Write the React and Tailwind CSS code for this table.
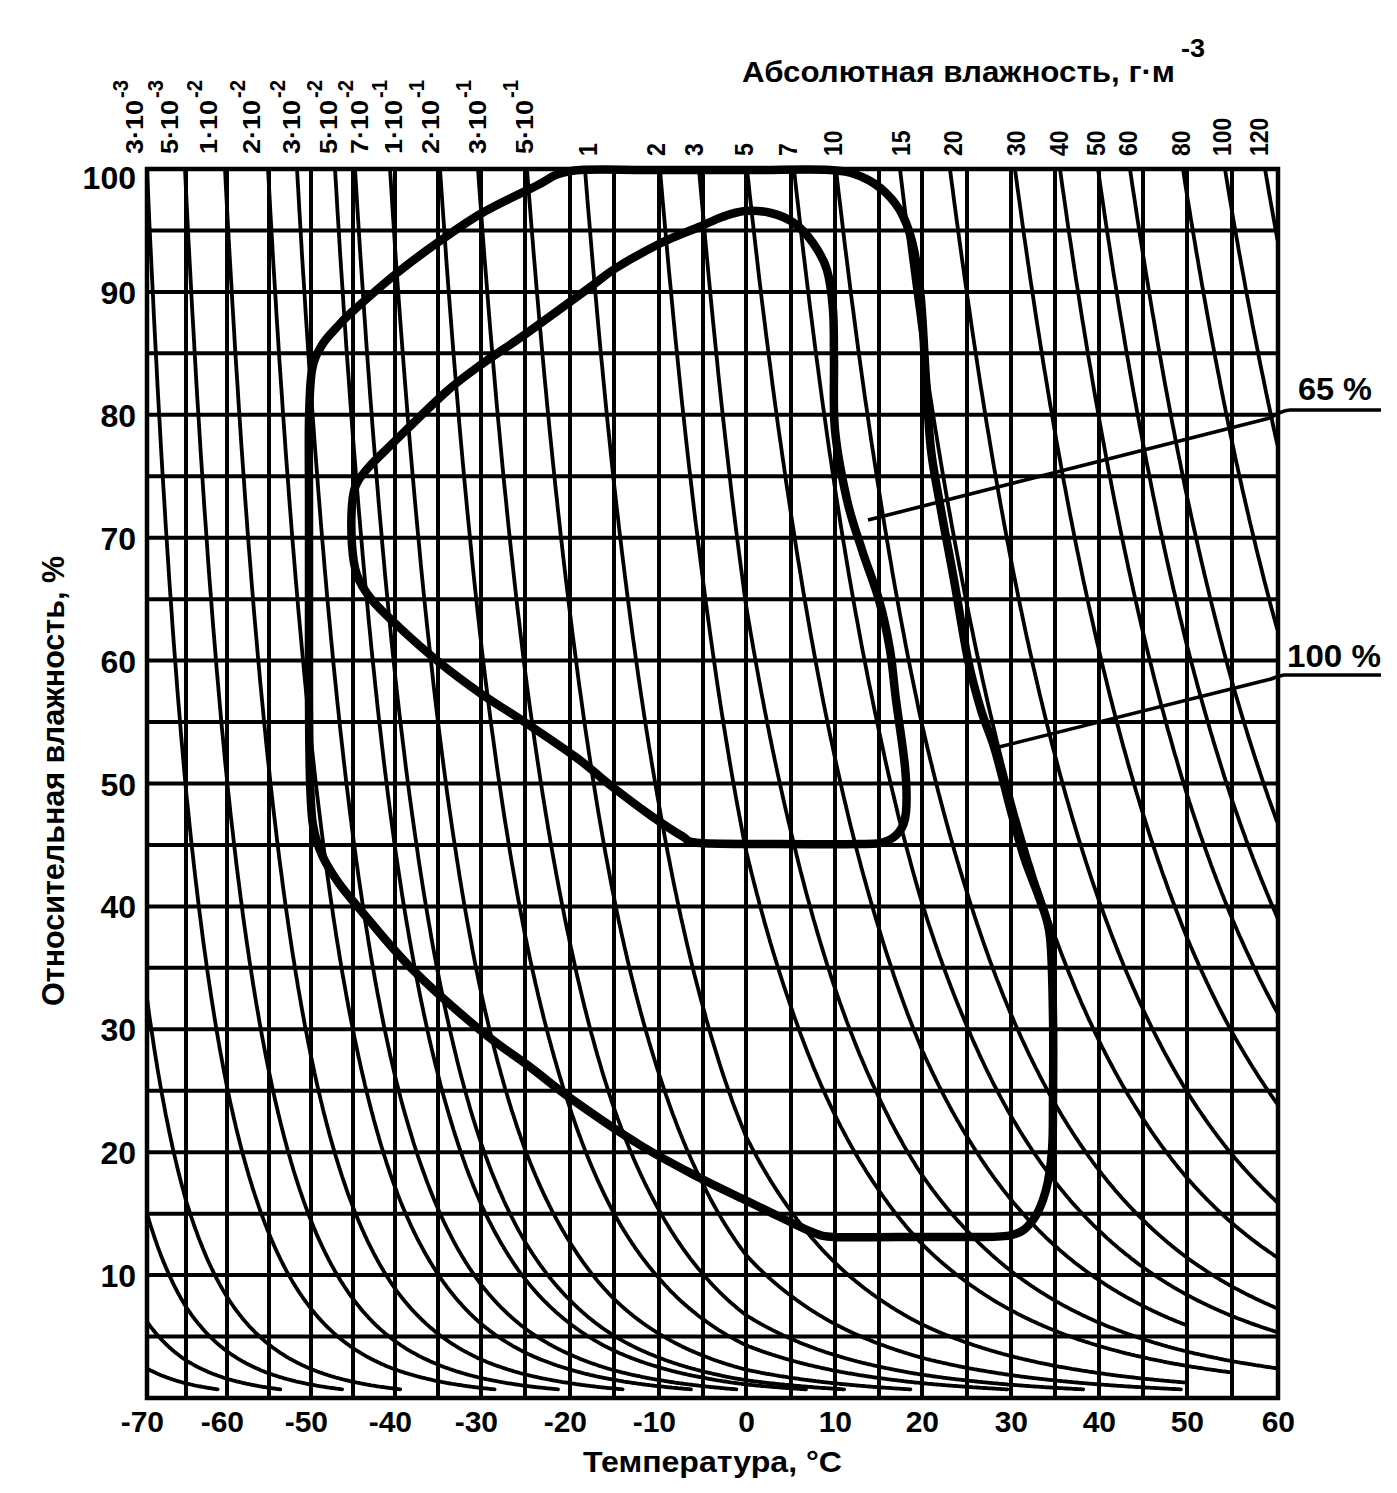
import React from 'react';

// x position of every 5 °C grid line, -70 … 60
const GX = [147, 186, 227, 269, 311, 353, 395, 438, 481, 525, 570, 614, 659, 703, 746, 791, 835, 879, 922, 967, 1011, 1055, 1099, 1143, 1187, 1232, 1278];
const LEFT = 147;
const RIGHT = 1278;
const TOP = 169;
const BOTTOM = 1398;

const tx = (t) => {
  const f = (t + 70) / 5;
  const i = Math.max(0, Math.min(25, Math.floor(f)));
  return GX[i] + (GX[i + 1] - GX[i]) * (f - i);
};

const xt = (x) => {
  let i = 0;
  while (i < 25 && GX[i + 1] < x) i++;
  return -70 + 5 * i + (5 * (x - GX[i])) / (GX[i + 1] - GX[i]);
};

const ry = (rh) => BOTTOM - rh * 12.29;

// saturation absolute humidity, g/m3 (ice below 0 °C)
const aSat = (t) => {
  const e = t < 0
    ? 6.112 * Math.exp((22.46 * t) / (272.62 + t))
    : 6.112 * Math.exp((17.62 * t) / (243.12 + t));
  return (216.7 * e) / (t + 273.15);
};

// curves of constant absolute humidity: [x at the top, rh where it starts, last temperature]
const CURVES = [
  [147, 100], [185, 100], [225, 100], [268, 100], [297, 100], [335, 100], [355, 100],
  [390, 100], [440, 100], [478, 100], [527, 100], [585, 100, 50], [660, 100, 55], [699, 100],
  [747, 100, 50], [794, 100], [836, 100], [900, 100], [950, 100], [1015, 100], [1060, 100],
  [1098, 100], [1130, 100], [1183, 100], [1225, 100], [1265, 100],
  [147, 32.5], [147, 15], [147, 6.2], [147, 2.4],
];

const curvePath = (x0, rh0, tEnd = 60) => {
  const t0 = xt(x0);
  const a = (rh0 / 100) * aSat(t0);
  const pts = [];
  for (let t = t0; t <= tEnd + 0.01; t += 0.15) {
    const rh = (100 * a) / aSat(t);
    if (rh < 0.7) break;
    pts.push(`${tx(t).toFixed(1)},${ry(rh).toFixed(1)}`);
  }
  return 'M' + pts.join(' L');
};

// Catmull-Rom through the points, as cubic beziers
const smooth = (pts, closed) => {
  const n = pts.length;
  const at = (i) => (closed ? pts[(i + n) % n] : pts[Math.max(0, Math.min(n - 1, i))]);
  let d = `M${pts[0][0]},${pts[0][1]}`;
  const last = closed ? n : n - 1;
  for (let i = 0; i < last; i++) {
    const p0 = at(i - 1), p1 = at(i), p2 = at(i + 1), p3 = at(i + 2);
    const c1 = [p1[0] + (p2[0] - p0[0]) / 6, p1[1] + (p2[1] - p0[1]) / 6];
    const c2 = [p2[0] - (p3[0] - p1[0]) / 6, p2[1] - (p3[1] - p1[1]) / 6];
    d += ` C${c1[0].toFixed(1)},${c1[1].toFixed(1)} ${c2[0].toFixed(1)},${c2[1].toFixed(1)} ${p2[0]},${p2[1]}`;
  }
  return d + (closed ? 'Z' : '');
};

const OUTER = [
  [571, 171], [650, 170], [750, 170], [830, 170], [862, 177], [886, 193], [903, 216], [914, 250],
  [921, 300], [926, 380], [931, 450], [941, 510], [954, 580], [968, 660], [981, 710], [995, 750],
  [1012, 815], [1025, 860], [1040, 900], [1050, 937], [1053, 1017], [1053, 1100], [1052, 1150],
  [1046, 1190], [1033, 1220], [1012, 1235], [968, 1237], [900, 1237], [834, 1237], [812, 1232],
  [780, 1217], [745, 1200], [700, 1178], [640, 1145], [573, 1100], [530, 1067], [480, 1030],
  [413, 970], [363, 913], [338, 882], [322, 855], [313, 825], [310, 780], [309, 700], [309, 600],
  [309, 500], [309, 420], [312, 370], [322, 345], [338, 326], [353, 311], [397, 273], [437, 243],
  [482, 213], [536, 186],
];

const INNER = [
  [745, 211], [771, 213], [794, 223], [813, 243], [827, 270], [833, 310], [834, 360], [835, 430],
  [847, 500], [862, 550], [879, 600], [890, 650], [896, 700], [905, 767], [906, 812], [899, 832],
  [884, 842], [860, 844], [780, 844], [700, 843], [682, 836], [650, 815], [610, 785], [577, 758],
  [523, 721], [480, 693], [440, 663], [400, 628], [372, 600], [357, 575], [352, 545], [352, 505],
  [356, 485], [368, 468], [393, 443], [446, 392], [482, 364], [527, 333], [589, 288], [616, 268],
  [661, 243], [699, 227], [722, 217],
];

// [baseline x, mantissa, exponent]
const EXP_LABELS = [
  [143, '3', '-3'], [178, '5', '-3'], [217, '1', '-2'], [260, '2', '-2'], [300, '3', '-2'],
  [337, '5', '-2'], [368, '7', '-2'], [402, '1', '-1'], [439, '2', '-1'], [486, '3', '-1'],
  [533, '5', '-1'],
];

// [baseline x, value]
const NUM_LABELS = [
  [597, '1'], [665, '2'], [703, '3'], [753, '5'], [797, '7'], [842, '10'], [910, '15'],
  [962, '20'], [1025, '30'], [1068, '40'], [1105, '50'], [1137, '60'], [1190, '80'],
  [1231, '100'], [1268, '120'],
];

const Y_LABELS = [100, 90, 80, 70, 60, 50, 40, 30, 20, 10];
const X_LABELS = [-70, -60, -50, -40, -30, -20, -10, 0, 10, 20, 30, 40, 50, 60];

function TopLabels() {
  return (
    <g>
      {EXP_LABELS.map(([x, m, p]) => (
        <g key={x} transform={`translate(${x},154) rotate(-90)`}>
          <text x="0" y="0" fontSize="23" textLength="54" lengthAdjust="spacingAndGlyphs">{m}·10</text>
          <text x="56" y="-15" fontSize="22" textLength="18" lengthAdjust="spacingAndGlyphs">{p}</text>
        </g>
      ))}
      {NUM_LABELS.map(([x, v]) => (
        <g key={x} transform={`translate(${x},156) rotate(-90)`}>
          <text x="0" y="0" fontSize="26" textLength={v.length * 12.8} lengthAdjust="spacingAndGlyphs">{v}</text>
        </g>
      ))}
    </g>
  );
}

function Grid() {
  const rows = [];
  for (let rh = 5; rh < 100; rh += 5) rows.push(ry(rh));
  return (
    <g stroke="#000" strokeWidth="4" fill="none">
      {GX.slice(1, -1).map((x) => (
        <line key={x} x1={x} y1={TOP} x2={x} y2={BOTTOM} />
      ))}
      {rows.map((y) => (
        <line key={y} x1={LEFT} y1={y} x2={RIGHT} y2={y} />
      ))}
      <rect x={LEFT} y={TOP} width={RIGHT - LEFT} height={BOTTOM - TOP} strokeWidth="4.5" />
    </g>
  );
}

export default function App() {
  return (
    <div className="w-[1397px] h-[1493px] bg-white">
      <svg
        width="1397"
        height="1493"
        viewBox="0 0 1397 1493"
        className="block font-bold [font-family:'Liberation_Sans_Narrow','Liberation_Sans',Arial,sans-serif]"
        fill="#000"
      >
        <defs>
          <clipPath id="plot">
            <rect x={LEFT} y={TOP - 2} width={RIGHT - LEFT} height={BOTTOM - TOP + 2} />
          </clipPath>
        </defs>

        <text x="742" y="82" fontSize="30" textLength="433" lengthAdjust="spacingAndGlyphs">
          Абсолютная влажность, г·м
        </text>
        <text x="1181" y="57" fontSize="26" textLength="24" lengthAdjust="spacingAndGlyphs">-3</text>

        <TopLabels />

        <Grid />

        <g clipPath="url(#plot)" stroke="#000" strokeWidth="3.8" fill="none" strokeLinecap="round" strokeLinejoin="round">
          {CURVES.map(([x, rh, end]) => (
            <path key={`${x}-${rh}`} d={curvePath(x, rh, end)} />
          ))}
        </g>

        <g stroke="#000" strokeWidth="8.5" fill="none" strokeLinejoin="round">
          <path d={smooth(OUTER, true)} />
          <path d={smooth(INNER, true)} />
        </g>

        <g stroke="#000" strokeWidth="3.6" fill="none" strokeLinejoin="round">
          <path d="M1381,410 L1290,410 Q1280,411 1270,418 L868,520" />
          <path d="M1381,675 L1284,675 Q1278,676 1271,679 L995,748" />
        </g>
        <text x="1298" y="400" fontSize="31" textLength="74" lengthAdjust="spacingAndGlyphs">65 %</text>
        <text x="1287" y="667" fontSize="31" textLength="94" lengthAdjust="spacingAndGlyphs">100 %</text>

        <g fontSize="32" textAnchor="end">
          {Y_LABELS.map((v) => (
            <text key={v} x="136" y={(v === 100 ? ry(v) + 8 : ry(v)) + 12}>{v}</text>
          ))}
        </g>

        <g fontSize="30" textAnchor="end">
          {X_LABELS.map((v) => (
            <text key={v} x={tx(v) + (v === 0 ? 9 : 17)} y="1432">{v}</text>
          ))}
        </g>

        <text
          transform="translate(64,781) rotate(-90)"
          textAnchor="middle"
          fontSize="31"
          textLength="450"
          lengthAdjust="spacingAndGlyphs"
        >
          Относительная влажность, %
        </text>

        <text x="583" y="1472" fontSize="30" textLength="259" lengthAdjust="spacingAndGlyphs">
          Температура, °C
        </text>
      </svg>
    </div>
  );
}
